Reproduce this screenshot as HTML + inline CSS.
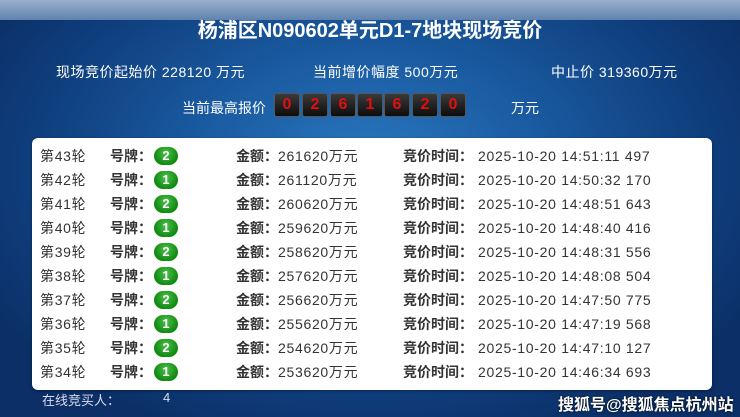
<!DOCTYPE html>
<html><head><meta charset="utf-8"><style>
*{margin:0;padding:0;box-sizing:border-box}
body{width:740px;height:417px;overflow:hidden;font-family:"Liberation Sans","Noto Sans CJK SC",sans-serif;background:radial-gradient(ellipse 60% 70% at 50% 40%,#2a78c0 0%,#1a5aa0 40%,#0f3f7e 75%,#0b2f66 100%);position:relative;color:#fff}
.top{position:absolute;left:0;top:0;width:740px;height:20px;background:linear-gradient(#9ab0cc,#5f82ae)}
.t{position:absolute;white-space:nowrap}
.title{left:0;width:740px;text-align:center;top:14px;font-size:20px;font-weight:bold}
.info{top:62px;font-size:14px;letter-spacing:0.5px}
.dg{position:absolute;top:93px;width:26px;height:24px;background:linear-gradient(#3a3a3a,#0d0d0d);border:1px solid #555;border-radius:3px;color:#e01010;font-weight:bold;font-size:16px;text-align:center;line-height:22px}
.panel{position:absolute;left:32px;top:138px;width:680px;height:252px;background:#fff;border-radius:6px;box-shadow:0 1px 3px #0006}
.r{position:absolute;left:0;width:680px;height:24px;font-size:14px;color:#333;line-height:24px;letter-spacing:0.7px}
.r span{position:absolute;white-space:nowrap}
.b{display:inline-block;width:24px;height:18px;border-radius:9px;background:radial-gradient(circle at 50% 35%,#4cc04c,#118a11 70%);color:#fff;font-weight:bold;text-align:center;line-height:18px;top:3px;font-size:13px;letter-spacing:0}
.k{font-weight:bold;letter-spacing:0}
</style></head><body>
<div class="top"></div>
<div class="t title">杨浦区N090602单元D1-7地块现场竞价</div>
<div class="t info" style="left:56px">现场竞价起始价 228120 万元</div>
<div class="t info" style="left:313px">当前增价幅度 500万元</div>
<div class="t info" style="left:551px">中止价 319360万元</div>
<div class="t" style="left:182px;top:98px;font-size:14px">当前最高报价</div>
<div class="dg" style="left:274px">0</div><div class="dg" style="left:302px">2</div><div class="dg" style="left:330px">6</div><div class="dg" style="left:357px">1</div><div class="dg" style="left:384px">6</div><div class="dg" style="left:412px">2</div><div class="dg" style="left:440px">0</div>
<div class="t" style="left:511px;top:98px;font-size:14px">万元</div>
<div class="panel">
<div class="r" style="top:6px"><span style="left:8px">第43轮</span><span class="k" style="left:78px">号牌：</span><span class="b" style="left:122px">2</span><span class="k" style="left:204px">金额：</span><span style="left:246px">261620万元</span><span class="k" style="left:371px">竞价时间：</span><span style="left:446px">2025-10-20 14:51:11 497</span></div>
<div class="r" style="top:30px"><span style="left:8px">第42轮</span><span class="k" style="left:78px">号牌：</span><span class="b" style="left:122px">1</span><span class="k" style="left:204px">金额：</span><span style="left:246px">261120万元</span><span class="k" style="left:371px">竞价时间：</span><span style="left:446px">2025-10-20 14:50:32 170</span></div>
<div class="r" style="top:54px"><span style="left:8px">第41轮</span><span class="k" style="left:78px">号牌：</span><span class="b" style="left:122px">2</span><span class="k" style="left:204px">金额：</span><span style="left:246px">260620万元</span><span class="k" style="left:371px">竞价时间：</span><span style="left:446px">2025-10-20 14:48:51 643</span></div>
<div class="r" style="top:78px"><span style="left:8px">第40轮</span><span class="k" style="left:78px">号牌：</span><span class="b" style="left:122px">1</span><span class="k" style="left:204px">金额：</span><span style="left:246px">259620万元</span><span class="k" style="left:371px">竞价时间：</span><span style="left:446px">2025-10-20 14:48:40 416</span></div>
<div class="r" style="top:102px"><span style="left:8px">第39轮</span><span class="k" style="left:78px">号牌：</span><span class="b" style="left:122px">2</span><span class="k" style="left:204px">金额：</span><span style="left:246px">258620万元</span><span class="k" style="left:371px">竞价时间：</span><span style="left:446px">2025-10-20 14:48:31 556</span></div>
<div class="r" style="top:126px"><span style="left:8px">第38轮</span><span class="k" style="left:78px">号牌：</span><span class="b" style="left:122px">1</span><span class="k" style="left:204px">金额：</span><span style="left:246px">257620万元</span><span class="k" style="left:371px">竞价时间：</span><span style="left:446px">2025-10-20 14:48:08 504</span></div>
<div class="r" style="top:150px"><span style="left:8px">第37轮</span><span class="k" style="left:78px">号牌：</span><span class="b" style="left:122px">2</span><span class="k" style="left:204px">金额：</span><span style="left:246px">256620万元</span><span class="k" style="left:371px">竞价时间：</span><span style="left:446px">2025-10-20 14:47:50 775</span></div>
<div class="r" style="top:174px"><span style="left:8px">第36轮</span><span class="k" style="left:78px">号牌：</span><span class="b" style="left:122px">1</span><span class="k" style="left:204px">金额：</span><span style="left:246px">255620万元</span><span class="k" style="left:371px">竞价时间：</span><span style="left:446px">2025-10-20 14:47:19 568</span></div>
<div class="r" style="top:198px"><span style="left:8px">第35轮</span><span class="k" style="left:78px">号牌：</span><span class="b" style="left:122px">2</span><span class="k" style="left:204px">金额：</span><span style="left:246px">254620万元</span><span class="k" style="left:371px">竞价时间：</span><span style="left:446px">2025-10-20 14:47:10 127</span></div>
<div class="r" style="top:222px"><span style="left:8px">第34轮</span><span class="k" style="left:78px">号牌：</span><span class="b" style="left:122px">1</span><span class="k" style="left:204px">金额：</span><span style="left:246px">253620万元</span><span class="k" style="left:371px">竞价时间：</span><span style="left:446px">2025-10-20 14:46:34 693</span></div>
</div>
<div class="t" style="left:42px;top:390px;font-size:13px;color:#dde">在线竞买人：</div>
<div class="t" style="left:163px;top:390px;font-size:13px;color:#dde">4</div>
<div class="t" style="left:558px;top:391px;font-size:16px;font-weight:bold;text-shadow:0 0 2px #000">搜狐号@搜狐焦点杭州站</div>
</body></html>
